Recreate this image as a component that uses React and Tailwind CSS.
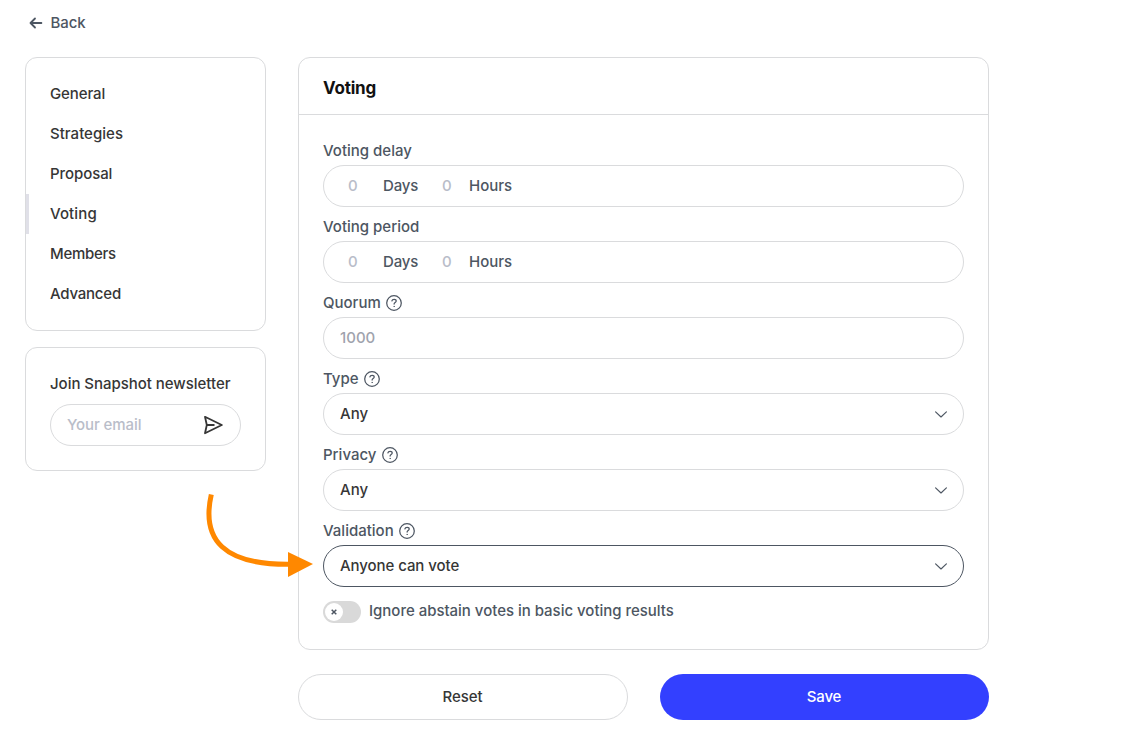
const LINE = "border border-[#dadbdd]";

function HelpIcon() {
  return (
    <svg className="ml-[5.500px] h-4 w-4 shrink-0" viewBox="0 0 16 16" fill="none" stroke="#4d5662" strokeWidth="1.25" strokeLinecap="round" strokeLinejoin="round">
      <circle cx="8" cy="8" r="7.3" />
      <path d="M5.9 5.900c.2-1 1-1.600 2.200-1.600s2.100.7 2.100 1.700c0 1.500-2.100 1.600-2.100 3.100" />
      <circle cx="8.1" cy="11.400" r=".35" fill="#4d5662" strokeWidth=".6" />
    </svg>
  );
}

function Chevron() {
  return (
    <svg className="h-[7px] w-3" viewBox="0 0 12 7" fill="none" stroke="#4d5662" strokeWidth="1.15" strokeLinecap="round" strokeLinejoin="round">
      <path d="M.6.8 6 6 11.4.8" />
    </svg>
  );
}

function Label({ text, help }) {
  return (
    <div className="flex h-6 items-center pb-[5px] text-[#4d5662]">
      <span>{text}</span>
      {help && <HelpIcon />}
    </div>
  );
}

function DurationField({ label }) {
  return (
    <div className="mb-2.5">
      <Label text={label} />
      <div className={`flex h-[42px] items-center rounded-full pl-6 text-[#4d5662] ${LINE}`}>
        <span className="w-[35px] text-[#b9bdc9]">0</span>
        <span className="w-[59px] tracking-[-0.2px]">Days</span>
        <span className="w-[27px] text-[#b9bdc9]">0</span>
        <span>Hours</span>
      </div>
    </div>
  );
}

function SelectField({ label, value, valueSpacing, active }) {
  return (
    <div className="mb-2.5">
      <Label text={label} help />
      <div className={`flex h-[42px] items-center justify-between rounded-full border pl-4 pr-[16.500px] text-[#363636] ${active ? "border-[#4d5662]" : "border-[#dadbdd]"}`}>
        <span className={valueSpacing}>{value}</span>
        <Chevron />
      </div>
    </div>
  );
}

const NAV = [
  ["General", "tracking-[-0.12px]"],
  ["Strategies", "tracking-[0.02px]"],
  ["Proposal", "tracking-[-0.08px]"],
  ["Voting", "tracking-[0.12px]"],
  ["Members", "tracking-[-0.28px]"],
  ["Advanced", "tracking-[-0.22px]"],
];

export default function App() {
  return (
    <div className="relative h-[747px] w-[1127px] overflow-hidden bg-white pl-[25px] pt-3 font-['Inter',sans-serif] text-[15px] font-medium leading-[22px] text-[#363636]">
      <div className="flex h-[22px] items-center pl-1 text-[#4d5662]">
        <svg className="mr-2 h-3.5 w-3.5" viewBox="0 0 14 14" fill="none" stroke="#4d5662" strokeWidth="1.8" strokeLinecap="round" strokeLinejoin="round">
          <path d="M6 2.500 1.500 7 6 11.500M1.700 7H12.400" />
        </svg>
        <span className="-ml-[0.5px] tracking-[-0.1px]">Back</span>
      </div>
      <div className="mt-[23px] flex items-start">
        <aside className="mr-8 flex w-[241px] flex-col gap-4">
          <nav className={`h-[274px] rounded-xl pt-4 ${LINE}`}>
            {NAV.map(([name, spacing]) => (
              <div key={name} className={`flex h-10 items-center ${name === "Voting" ? "border-l-[3px] border-[#e0e0e8] pl-[21px]" : "pl-6"}`}>
                <span className={spacing}>{name}</span>
              </div>
            ))}
          </nav>
          <section className={`h-[124px] rounded-xl px-6 pt-[25px] ${LINE}`}>
            <div className="whitespace-nowrap tracking-[-0.03px]">Join Snapshot newsletter</div>
            <div className={`mt-[9px] flex h-[42px] items-center justify-between rounded-full pl-4 pr-[17px] ${LINE}`}>
              <span className="tracking-[-0.08px] text-[#b9bdc9]">Your email</span>
              <svg className="h-5 w-5" viewBox="0 0 20 20" fill="none" stroke="#363636" strokeWidth="1.8" strokeLinejoin="round">
                <path d="M2 1.800 18.800 10 2 18.200 3.800 10zM3.800 10H11.500" />
              </svg>
            </div>
          </section>
        </aside>
        <main className="w-[691px]">
          <section className={`h-[593px] rounded-xl ${LINE}`}>
            <h1 className="flex h-[57px] items-center border-b border-[#dadbdd] pl-6 pt-1 text-[17px] font-bold tracking-[-0.2px] text-[#111]">Voting</h1>
            <div className="px-6 pt-[26px]">
              <DurationField label="Voting delay" />
              <DurationField label="Voting period" />
              <div className="mb-2.5">
                <Label text="Quorum" help />
                <div className={`flex h-[42px] items-center rounded-full pl-4 text-[#9fa3ad] ${LINE}`}>1000</div>
              </div>
              <SelectField label="Type" value="Any" valueSpacing="tracking-normal" />
              <SelectField label="Privacy" value="Any" valueSpacing="tracking-normal" />
              <SelectField label="Validation" value="Anyone can vote" valueSpacing="tracking-[-0.07px]" active />
              <div className="mt-3.5 flex h-[22px] items-center text-[#4d5662]">
                <div className="mr-2 flex h-[22px] w-[38px] items-center rounded-full bg-[#d9d9d9] pl-0.5">
                  <div className="flex h-[18px] w-[18px] items-center justify-center rounded-full bg-white">
                    <svg className="h-1.5 w-1.5" viewBox="0 0 6 6" stroke="#4d5662" strokeWidth="1.5">
                      <path d="m.7.7 4.6 4.6M5.3.7.7 5.3" />
                    </svg>
                  </div>
                </div>
                <span className="pb-0.5 tracking-[-0.02px]">Ignore abstain votes in basic voting results</span>
              </div>
            </div>
          </section>
          <div className="mt-6 flex gap-8">
            <button className={`h-[46px] w-[330px] rounded-full pr-px tracking-[-0.1px] ${LINE}`}>Reset</button>
            <button className="h-[46px] w-[329px] rounded-full bg-[#3340ff] pr-px tracking-[-0.15px] text-white">Save</button>
          </div>
        </main>
      </div>
      <svg className="pointer-events-none absolute left-[200px] top-[488px] h-[94px] w-[120px]" viewBox="200 488 120 94">
        <path d="M211.300 494.500C201 540 224 565 290 564.300" fill="none" stroke="#ff8800" strokeWidth="5" />
        <path d="M288 552 313 564 288 577z" fill="#ff8800" />
      </svg>
    </div>
  );
}
